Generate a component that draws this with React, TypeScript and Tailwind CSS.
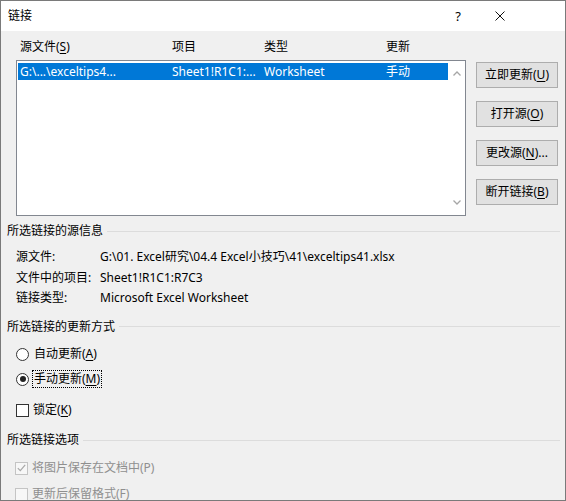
import type { ReactNode } from "react";

const FONT = "font-['Noto_Sans','Noto_Sans_CJK_SC',sans-serif]";

function U({ children }: { children: ReactNode }) {
  return <span className="underline underline-offset-2">{children}</span>;
}

function GroupTitle({ children }: { children: ReactNode }) {
  return (
    <div className="flex h-[16px] items-center pl-[6px] pr-[5px]">
      <span className="whitespace-nowrap">{children}</span>
      <div className="ml-[4px] h-px flex-1 bg-[#dcdcdc]" />
    </div>
  );
}

function Button({ children }: { children: ReactNode }) {
  return (
    <div className="flex h-[26px] w-[82px] items-center justify-center border border-[#adadad] bg-[#e1e1e1]">
      {children}
    </div>
  );
}

function Radio({ checked }: { checked?: boolean }) {
  return (
    <div className="flex h-[13px] w-[13px] shrink-0 items-center justify-center rounded-full border border-[#333] bg-white">
      {checked && <div className="h-[6px] w-[6px] rounded-full bg-[#222]" />}
    </div>
  );
}

const INFO = [
  ["源文件:", "G:\\01. Excel研究\\04.4 Excel小技巧\\41\\exceltips41.xlsx"],
  ["文件中的项目:", "Sheet1!R1C1:R7C3"],
  ["链接类型:", "Microsoft Excel Worksheet"],
];

export default function App() {
  return (
    <div
      className={`flex h-[501px] w-[566px] flex-col overflow-hidden border border-[#7a7a7a] bg-[#f0f0f0] text-[12px] leading-[16px] text-black ${FONT}`}
    >
      {/* Title bar */}
      <div className="flex h-[30px] shrink-0 items-center bg-white pl-[7px]">
        <span>链接</span>
        <span className="ml-auto mr-[34px] text-[13px]">?</span>
        <svg width="10" height="10" viewBox="0 0 10 10" className="mr-[60px]">
          <path d="M0.5 0.5 L9.5 9.5 M9.5 0.5 L0.5 9.5" stroke="#111" strokeWidth="1" />
        </svg>
      </div>

      {/* Column headers */}
      <div className="mt-[8px] flex h-[16px] pl-[19px]">
        <span className="w-[152px]">
          源文件(<U>S</U>)
        </span>
        <span className="w-[92px]">项目</span>
        <span className="w-[122px]">类型</span>
        <span>更新</span>
      </div>

      {/* List + buttons */}
      <div className="mt-[5px] flex pl-[15px]">
        <div className="flex h-[156px] w-[450px] border border-[#828790] bg-white">
          <div className="flex-1 pl-[1px] pt-[2px]">
            <div className="flex h-[17px] items-center bg-[#0078d7] pl-[2px] text-white">
              <span className="w-[152px]">G:\...\exceltips4...</span>
              <span className="w-[92px]">Sheet1!R1C1:...</span>
              <span className="w-[122px]">Worksheet</span>
              <span>手动</span>
            </div>
          </div>
          <div className="flex w-[17px] flex-col items-center justify-between py-[10px]">
            <svg width="8" height="5" viewBox="0 0 8 5">
              <path d="M0.5 4.5 L4 1 L7.5 4.5" fill="none" stroke="#a6a6a6" strokeWidth="1.3" />
            </svg>
            <svg width="8" height="5" viewBox="0 0 8 5">
              <path d="M0.5 0.5 L4 4 L7.5 0.5" fill="none" stroke="#a6a6a6" strokeWidth="1.3" />
            </svg>
          </div>
        </div>
        <div className="ml-[10px] flex flex-col gap-[13px] pt-[2px]">
          <Button>
            立即更新(<U>U</U>)
          </Button>
          <Button>
            打开源(<U>O</U>)
          </Button>
          <Button>
            更改源(<U>N</U>)...
          </Button>
          <Button>
            断开链接(<U>B</U>)
          </Button>
        </div>
      </div>

      {/* Source info */}
      <div className="mt-[7px]">
        <GroupTitle>所选链接的源信息</GroupTitle>
      </div>
      <div className="mt-[8px] flex flex-col pl-[15px]">
        {INFO.map(([k, v]) => (
          <div key={k} className="flex h-[20.5px] items-center">
            <span className="w-[84px]">{k}</span>
            <span>{v}</span>
          </div>
        ))}
      </div>

      {/* Update mode */}
      <div className="mt-[10px]">
        <GroupTitle>所选链接的更新方式</GroupTitle>
      </div>
      <div className="mt-[11.5px] flex h-[16px] items-center pl-[15px]">
        <Radio />
        <span className="ml-[5px]">
          自动更新(<U>A</U>)
        </span>
      </div>
      <div className="mt-[9px] flex h-[16px] items-center pl-[15px]">
        <Radio checked />
        <span className="ml-[3px] border border-dotted border-black px-[1px] leading-[16px]">
          手动更新(<U>M</U>)
        </span>
      </div>
      <div className="mt-[15px] flex h-[16px] items-center pl-[15px]">
        <div className="h-[13px] w-[13px] shrink-0 border border-[#333] bg-white" />
        <span className="ml-[4px]">
          锁定(<U>K</U>)
        </span>
      </div>

      {/* Options */}
      <div className="mt-[14px]">
        <GroupTitle>所选链接选项</GroupTitle>
      </div>
      <div className="mt-[12px] flex h-[16px] items-center pl-[14px] text-[#8f8f8f]">
        <div className="flex h-[13px] w-[13px] shrink-0 items-center justify-center border border-[#c4c4c4] bg-[#f7f7f7]">
          <svg width="9" height="8" viewBox="0 0 9 8">
            <path d="M0.8 4.2 L3.3 6.7 L8.2 0.8" fill="none" stroke="#a8a8a8" strokeWidth="1.2" />
          </svg>
        </div>
        <span className="ml-[4px]">将图片保存在文档中(P)</span>
      </div>
      <div className="mt-[10px] flex h-[16px] items-center pl-[14px] text-[#8f8f8f]">
        <div className="h-[13px] w-[13px] shrink-0 border border-[#c4c4c4] bg-[#f7f7f7]" />
        <span className="ml-[4px]">更新后保留格式(F)</span>
      </div>
    </div>
  );
}
